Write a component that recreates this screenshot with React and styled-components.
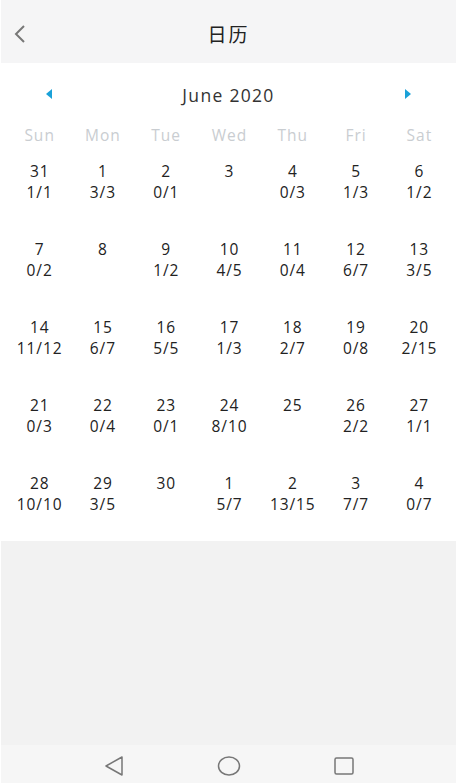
import React from 'react'
import styled, { createGlobalStyle } from 'styled-components'

const GlobalStyle = createGlobalStyle`
    html, body {
        margin: 0;
        padding: 0;
        background: #ffffff;
    }
    body {
        font-family: "Open Sans", "Noto Sans CJK SC", sans-serif;
    }
`

const Page = styled.div`
    width: 458px;
    height: 783px;
    display: flex;
    flex-direction: column;
    box-sizing: border-box;
    padding: 0 2px 0 1px;
    background: #ffffff;
    overflow: hidden;
`
const Header = styled.header`
    height: 63px;
    flex-shrink: 0;
    display: flex;
    align-items: center;
    position: relative;
    background: #f5f5f6;
    h1 {
        flex: 1;
        margin: 0;
        padding-top: 4px;
        text-align: center;
        font-family: "Noto Sans CJK SC", sans-serif;
        font-size: 19px;
        font-weight: 400;
        color: #222;
        letter-spacing: 2px;
    }
`
const BackButton = styled.button`
    position: absolute;
    left: 10px;
    top: 23px;
    border: 0;
    background: none;
    padding: 0;
    display: flex;
`
const Calendar = styled.section`
    background: #ffffff;
    padding: 0 5px 26px 7px;
`
const MonthBar = styled.div`
    height: 61px;
    display: flex;
    align-items: center;
    justify-content: space-between;
    padding: 0 40px 0 38px;
    span {
        font-size: 17.5px;
        line-height: 22px;
        color: #333;
        letter-spacing: 1.3px;
        padding-top: 2px;
    }
`
const Arrow = styled.div`
    width: 0;
    height: 0;
    border-top: 5px solid transparent;
    border-bottom: 5px solid transparent;
    ${p => p.$dir === 'left'
        ? 'border-right: 6px solid #1aa1d8;'
        : 'border-left: 6px solid #1aa1d8;'}
`
const Grid = styled.div`
    display: grid;
    grid-template-columns: repeat(7, 1fr);
    row-gap: 36px;
`
const WeekRow = styled.div`
    display: grid;
    grid-template-columns: repeat(7, 1fr);
    margin-bottom: 15px;
`
const WeekDay = styled.div`
    line-height: 22px;
    text-align: center;
    font-size: 15.5px;
    color: #c9cdd1;
    letter-spacing: 1px;
`
const Cell = styled.div`
    display: flex;
    flex-direction: column;
    align-items: center;
    font-size: 15.5px;
    color: #222;
    line-height: 21px;
    letter-spacing: 0.9px;
    div {
        height: 21px;
    }
`
const Rest = styled.div`
    flex: 1;
    background: #f2f2f2;
`
const NavBar = styled.nav`
    height: 38px;
    flex-shrink: 0;
    box-sizing: border-box;
    background: #f6f6f6;
    display: flex;
    align-items: center;
    justify-content: center;
    gap: 92px;
    padding-top: 4px;
    svg {
        display: block;
    }
`

const week = ['Sun', 'Mon', 'Tue', 'Wed', 'Thu', 'Fri', 'Sat']

const days = [
    ['31', '1/1'], ['1', '3/3'], ['2', '0/1'], ['3', ''], ['4', '0/3'], ['5', '1/3'], ['6', '1/2'],
    ['7', '0/2'], ['8', ''], ['9', '1/2'], ['10', '4/5'], ['11', '0/4'], ['12', '6/7'], ['13', '3/5'],
    ['14', '11/12'], ['15', '6/7'], ['16', '5/5'], ['17', '1/3'], ['18', '2/7'], ['19', '0/8'], ['20', '2/15'],
    ['21', '0/3'], ['22', '0/4'], ['23', '0/1'], ['24', '8/10'], ['25', ''], ['26', '2/2'], ['27', '1/1'],
    ['28', '10/10'], ['29', '3/5'], ['30', ''], ['1', '5/7'], ['2', '13/15'], ['3', '7/7'], ['4', '0/7'],
]

const App = () => {
    return (
        <Page>
            <GlobalStyle />
            <Header>
                <BackButton>
                    <svg width="18" height="22" viewBox="0 0 18 22">
                        <path d="M13 3 L5 11 L13 19" fill="none" stroke="#777" strokeWidth="2" />
                    </svg>
                </BackButton>
                <h1>日历</h1>
            </Header>
            <Calendar>
                <MonthBar>
                    <Arrow $dir="left" />
                    <span>June 2020</span>
                    <Arrow $dir="right" />
                </MonthBar>
                <WeekRow>
                    {week.map(w => <WeekDay key={w}>{w}</WeekDay>)}
                </WeekRow>
                <Grid>
                    {days.map(([d, c], i) => (
                        <Cell key={i}>
                            <div>{d}</div>
                            <div>{c}</div>
                        </Cell>
                    ))}
                </Grid>
            </Calendar>
            <Rest />
            <NavBar>
                <svg width="22" height="22" viewBox="0 0 22 22">
                    <path d="M19 2 L3 11 L19 20 Z" fill="none" stroke="#777" strokeWidth="1.5" strokeLinejoin="round" />
                </svg>
                <svg width="24" height="22" viewBox="0 0 24 22">
                    <ellipse cx="12" cy="11" rx="10.5" ry="9" fill="none" stroke="#777" strokeWidth="1.5" />
                </svg>
                <svg width="22" height="22" viewBox="0 0 22 22">
                    <rect x="2" y="3" width="18" height="16" rx="1.5" fill="none" stroke="#777" strokeWidth="1.5" />
                </svg>
            </NavBar>
        </Page>
    )
}

export default App
